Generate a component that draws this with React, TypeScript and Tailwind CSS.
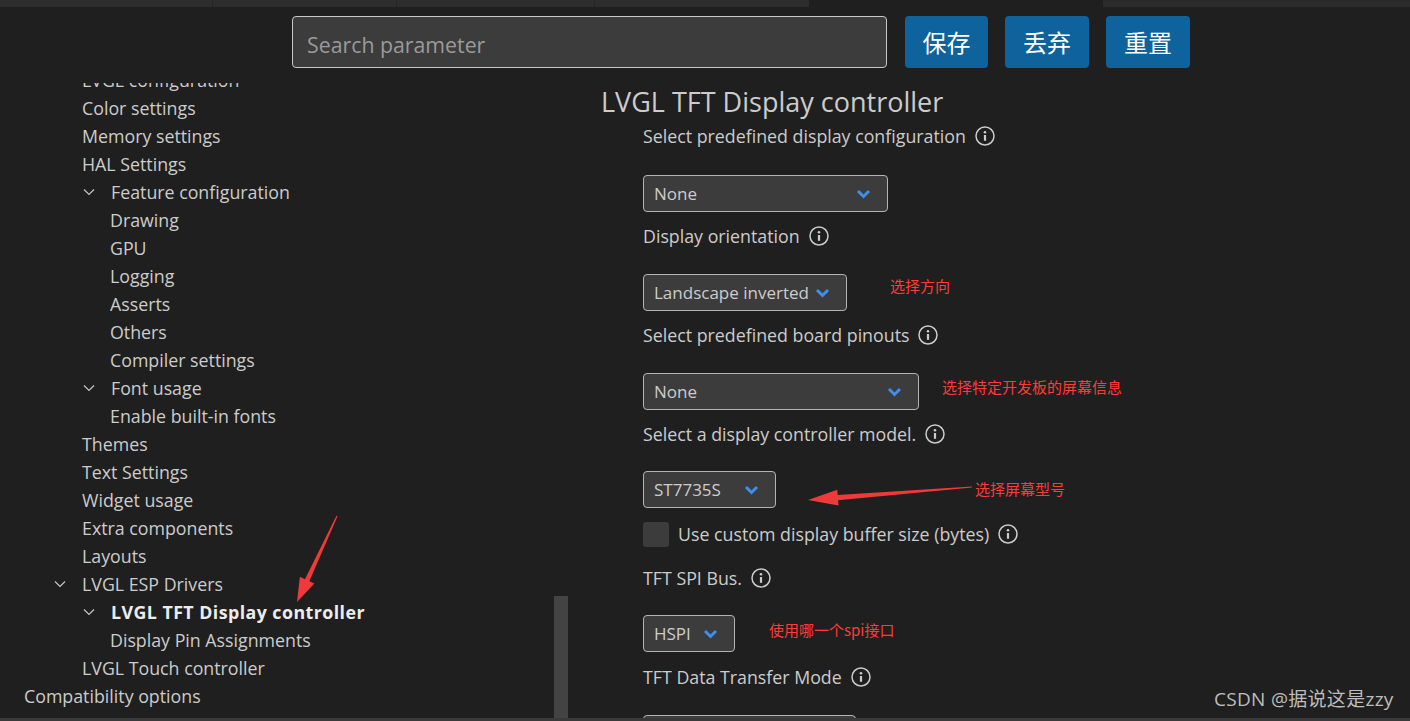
import { ReactElement } from 'react';

const FONT = 'font-["Open_Sans","Noto_Sans","Noto_Sans_CJK_SC",sans-serif]';
const CJK = 'font-["Noto_Sans_CJK_SC","Noto_Sans",sans-serif]';

type Row = { t: string; pl: number; chevron?: boolean; bold?: boolean };

const rows: Row[] = [
  { t: 'LVGL configuration', pl: 82 },
  { t: 'Color settings', pl: 82 },
  { t: 'Memory settings', pl: 82 },
  { t: 'HAL Settings', pl: 82 },
  { t: 'Feature configuration', pl: 83, chevron: true },
  { t: 'Drawing', pl: 110 },
  { t: 'GPU', pl: 110 },
  { t: 'Logging', pl: 110 },
  { t: 'Asserts', pl: 110 },
  { t: 'Others', pl: 110 },
  { t: 'Compiler settings', pl: 110 },
  { t: 'Font usage', pl: 83, chevron: true },
  { t: 'Enable built-in fonts', pl: 110 },
  { t: 'Themes', pl: 82 },
  { t: 'Text Settings', pl: 82 },
  { t: 'Widget usage', pl: 82 },
  { t: 'Extra components', pl: 82 },
  { t: 'Layouts', pl: 82 },
  { t: 'LVGL ESP Drivers', pl: 54, chevron: true },
  { t: 'LVGL TFT Display controller', pl: 83, chevron: true, bold: true },
  { t: 'Display Pin Assignments', pl: 110 },
  { t: 'LVGL Touch controller', pl: 82 },
  { t: 'Compatibility options', pl: 24 },
];

function TreeChevron() {
  return (
    <svg width="12" height="8" viewBox="0 0 12 8" className="mr-[16px] shrink-0">
      <polyline points="1,1.5 6,6.5 11,1.5" fill="none" stroke="#c5c5c5" strokeWidth="1.2" />
    </svg>
  );
}

function InfoIcon() {
  return (
    <svg width="20" height="20" viewBox="0 0 20 20" className="shrink-0">
      <circle cx="10" cy="10" r="9" fill="none" stroke="#cccccc" strokeWidth="1.5" />
      <circle cx="10" cy="6.2" r="1.3" fill="#cccccc" />
      <line x1="10" y1="9" x2="10" y2="14.8" stroke="#cccccc" strokeWidth="2.2" />
    </svg>
  );
}

function BlueChevron() {
  return (
    <svg width="15" height="10" viewBox="0 0 15 10" className="shrink-0">
      <polyline points="2,2 7.5,7.5 13,2" fill="none" stroke="#3c8fec" strokeWidth="3" />
    </svg>
  );
}

function Label({ text, className = '' }: { text: string; className?: string }) {
  return (
    <div className={`flex h-[28px] items-center gap-[9px] text-[17.8px] text-[#cccccc] ${className}`}>
      <span>{text}</span>
      <InfoIcon />
    </div>
  );
}

function Select({ value, width, className = '', note, noteGap = '' }: { value: string; width: string; className?: string; note?: string; noteGap?: string }) {
  return (
    <div className={`flex items-center ${className}`}>
      <div className={`flex h-[37px] items-center justify-between rounded-[4px] border border-[#b4b4b4] bg-[#3c3c3c] pl-[10px] pr-[16px] text-[17px] text-[#cccccc] ${width}`}>
        <span>{value}</span>
        <BlueChevron />
      </div>
      {note && <span className={`${CJK} text-[15px] text-[#ff3a3a] ${noteGap}`}>{note}</span>}
    </div>
  );
}

function arrow(x1: number, y1: number, x2: number, y2: number, headLen: number, headHalf: number, tailW: number, neckW: number) {
  const len = Math.hypot(x2 - x1, y2 - y1);
  const dx = (x2 - x1) / len;
  const dy = (y2 - y1) / len;
  const nx = -dy;
  const ny = dx;
  const bx = x2 - dx * headLen;
  const by = y2 - dy * headLen;
  const pts = [
    [x1 + nx * tailW, y1 + ny * tailW],
    [bx + nx * neckW, by + ny * neckW],
    [bx + nx * headHalf, by + ny * headHalf],
    [x2, y2],
    [bx - nx * headHalf, by - ny * headHalf],
    [bx - nx * neckW, by - ny * neckW],
    [x1 - nx * tailW, y1 - ny * tailW],
  ];
  return pts.map((p) => p.join(',')).join(' ');
}

export default function App(): ReactElement {
  return (
    <div className={`relative h-[721px] w-[1410px] overflow-hidden bg-[#1f1f1f] ${FONT}`}>
      {/* editor tab strip */}
      <div className="flex h-[7px]">
        <div className="w-[213px] border-r border-[#252525] bg-[#2d2d2d]" />
        <div className="w-[184px] border-r border-[#252525] bg-[#2d2d2d]" />
        <div className="w-[198px] border-r border-[#252525] bg-[#2d2d2d]" />
        <div className="w-[214px] bg-[#2d2d2d]" />
        <div className="w-[294px] bg-[#1f1f1f]" />
        <div className="flex-1 bg-[#2b2b2b]" />
      </div>

      {/* search header */}
      <div className="flex h-[76px] items-start pt-[9px]">
        <div className="ml-[292px] flex h-[52px] w-[595px] items-center rounded-[4px] border border-[#c8c8c8] bg-[#3c3c3c] px-[14px] pt-[5px] text-[21.3px] text-[#9a9a9a]">
          Search parameter
        </div>
        <div className={`ml-[18px] flex gap-[17px] ${CJK} text-[24px] text-white`}>
          <div className="flex h-[52px] w-[83px] items-center justify-center rounded-[4px] bg-[#0e639c]">保存</div>
          <div className="flex h-[52px] w-[84px] items-center justify-center rounded-[4px] bg-[#0e639c]">丢弃</div>
          <div className="flex h-[52px] w-[84px] items-center justify-center rounded-[4px] bg-[#0e639c]">重置</div>
        </div>
      </div>

      <div className="flex h-[635px] overflow-hidden">
        {/* tree sidebar */}
        <div className="relative w-[568px] shrink-0 overflow-hidden">
          <div className="-mt-[17px]">
            {rows.map((r) => (
              <div
                key={r.t}
                className={`flex h-[28px] items-center text-[17.8px] ${r.bold ? 'font-bold tracking-[0.45px] text-[#ececec]' : 'text-[#cccccc]'}`}
                style={{ paddingLeft: r.pl }}
              >
                {r.chevron && <TreeChevron />}
                <span>{r.t}</span>
              </div>
            ))}
          </div>
          <div className="absolute bottom-0 right-0 h-[122px] w-[14px] bg-[#434343]" />
        </div>

        {/* settings form */}
        <div className="flex-1">
          <div className="ml-[33px] flex h-[38px] items-center text-[27px] text-[#cccccc]">LVGL TFT Display controller</div>
          <div className="ml-[75px] flex flex-col">
            <Label text="Select predefined display configuration" className="mt-[1px]" />
            <Select value="None" width="w-[245px]" className="mt-[25px]" />
            <Label text="Display orientation" className="mt-[10px]" />
            <Select value="Landscape inverted" width="w-[204px]" className="mt-[24px]" note="选择方向" noteGap="ml-[43px] -mt-[12px]" />
            <Label text="Select predefined board pinouts" className="mt-[10px]" />
            <Select value="None" width="w-[276px]" className="mt-[24px]" note="选择特定开发板的屏幕信息" noteGap="ml-[23px] -mt-[8px]" />
            <Label text="Select a display controller model." className="mt-[10px]" />
            <Select value="ST7735S" width="w-[133px]" className="mt-[23px]" />
            <div className="mt-[12px] flex h-[28px] items-center text-[17.8px] text-[#cccccc]">
              <div className="mr-[9px] h-[25px] w-[26px] rounded-[3px] bg-[#3c3c3c]" />
              <span className="mr-[9px]">Use custom display buffer size (bytes)</span>
              <InfoIcon />
            </div>
            <Label text="TFT SPI Bus." className="mt-[16px]" />
            <Select value="HSPI" width="w-[92px]" className="mt-[23px]" note="使用哪一个spi接口" noteGap="ml-[34px] -mt-[6px]" />
            <Label text="TFT Data Transfer Mode" className="mt-[11px]" />
            <Select value="" width="w-[213px]" className="mt-[24px]" />
          </div>
        </div>
      </div>
      <div className="h-[3px] bg-[#3a3a3a]" />

      {/* annotation arrows */}
      <svg className="pointer-events-none absolute left-0 top-0" width="1410" height="721">
        <polygon points={arrow(337, 516, 297, 602, 24, 8, 0.6, 2.4)} fill="#f03a3a" />
        <polygon points={arrow(972, 487, 808, 500, 30, 8, 0.6, 2.6)} fill="#f03a3a" />
      </svg>
      <span className={`absolute left-[975px] top-[478px] ${CJK} text-[15px] text-[#ff3a3a]`}>选择屏幕型号</span>

      {/* watermark */}
      <span className={`absolute left-[1214px] top-[685px] ${FONT} text-[19px] tracking-[0.3px] text-[#bdbdbd]`}>CSDN @据说这是zzy</span>
    </div>
  );
}
